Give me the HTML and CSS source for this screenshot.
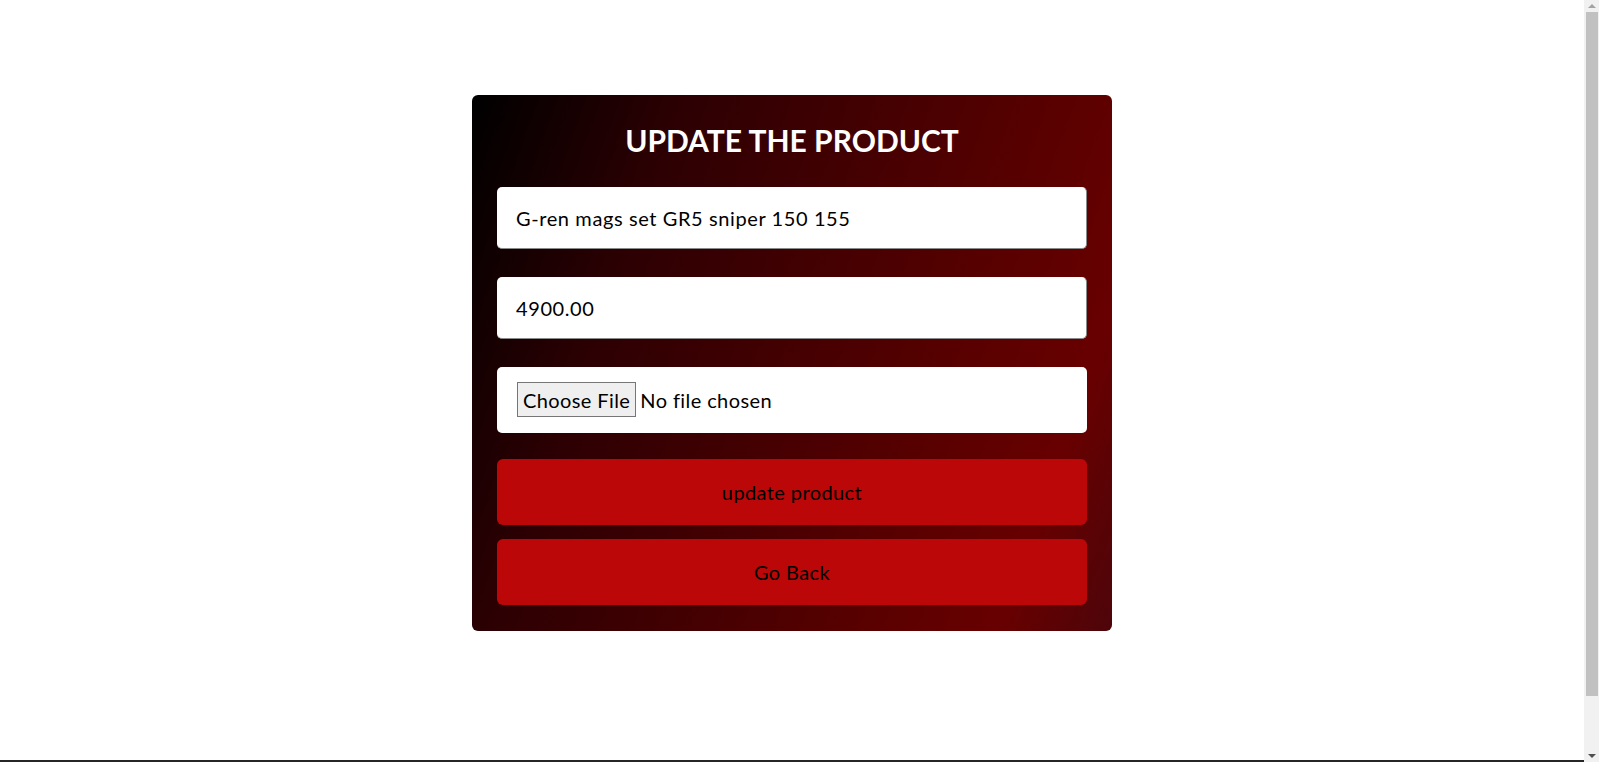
FILE: index.html
```html
<!DOCTYPE html>
<html lang="en">
<head>
<meta charset="utf-8">
<title>Update the product</title>
<link rel="stylesheet" href="styles.css">
</head>
<body>
<main class="page">
  <form class="card">
    <h2 class="card-title">UPDATE THE PRODUCT</h2>
    <input class="field" type="text" value="G-ren mags set GR5 sniper 150 155">
    <input class="field" type="text" value="4900.00">
    <div class="file-box"><input class="file-input" type="file"></div>
    <button class="btn btn-update" type="button">update product</button>
    <button class="btn" type="button">Go Back</button>
  </form>
</main>
<footer class="footer"></footer>
<div class="scrollbar" aria-hidden="true">
  <div class="sb-arrow sb-up"></div>
  <div class="sb-track"><div class="sb-thumb"></div></div>
  <div class="sb-arrow sb-down"></div>
</div>
</body>
</html>
```
FILE: styles.css
```css
html, body {
  margin: 0;
  padding: 0;
}
body {
  background: #ffffff;
  font-family: Lato, "Noto Sans", sans-serif;
}
.page {
  display: flex;
  justify-content: center;
  padding: 95px 15px 0 0;
  height: 665px;
  box-sizing: border-box;
}
.card {
  width: 640px;
  height: 536px;
  box-sizing: border-box;
  padding: 25px 25px 26px;
  border-radius: 6px;
  background: linear-gradient(110deg, #000000 0%, #2c0003 25%, #5e0000 75%, #680000 86%, #4d050a 100%);
  display: flex;
  flex-direction: column;
}
.card-title {
  margin: 0 0 27px;
  color: #ffffff;
  font-size: 30px;
  line-height: 40px;
  font-weight: 700;
  text-align: center;
}
.field {
  height: 62px;
  box-sizing: border-box;
  margin: 0 0 28px;
  padding: 0 19px;
  border: none;
  border-right: 1px solid #8a8a8a;
  border-bottom: 1px solid #8a8a8a;
  border-radius: 5px;
  background: #ffffff;
  font-family: inherit;
  font-size: 20px;
  letter-spacing: 0.6px;
  color: #000;
  outline: none;
}
.file-box {
  height: 66px;
  box-sizing: border-box;
  margin: 0 0 26px;
  padding: 15px 20px;
  background: #ffffff;
  border-radius: 5px;
}
.file-input {
  font-family: inherit;
  font-size: 20px;
  letter-spacing: 0.4px;
  color: #000;
}
.file-input::file-selector-button {
  font-family: inherit;
  font-size: 20px;
  letter-spacing: 0.4px;
  height: 35px;
  padding: 0 5px;
  background: #efefef;
  border: 1px solid #767676;
  border-radius: 0;
  margin-right: 4px;
}
.btn {
  height: 66px;
  border: none;
  border-radius: 6px;
  background: #bb0707;
  color: #000;
  font-family: inherit;
  font-size: 20px;
  letter-spacing: 0.4px;
}
.btn-update {
  margin-bottom: 14px;
}
.footer {
  height: 64px;
  background: #262626;
  margin-top: 95px;
}
.scrollbar {
  position: fixed;
  top: 0;
  right: 0;
  width: 15px;
  height: 100vh;
  background: #f1f1f1;
  display: flex;
  flex-direction: column;
}
.sb-arrow {
  height: 12px;
  display: flex;
  justify-content: center;
  align-items: center;
}
.sb-up::before {
  content: "";
  border-left: 4px solid transparent;
  border-right: 4px solid transparent;
  border-bottom: 4px solid #a3a3a3;
}
.sb-down::before {
  content: "";
  border-left: 4px solid transparent;
  border-right: 4px solid transparent;
  border-top: 4px solid #505050;
}
.sb-track {
  flex: 1;
  padding: 0 1px 0 2px;
}
.sb-thumb {
  height: 684px;
  background: #c1c1c1;
}
```
